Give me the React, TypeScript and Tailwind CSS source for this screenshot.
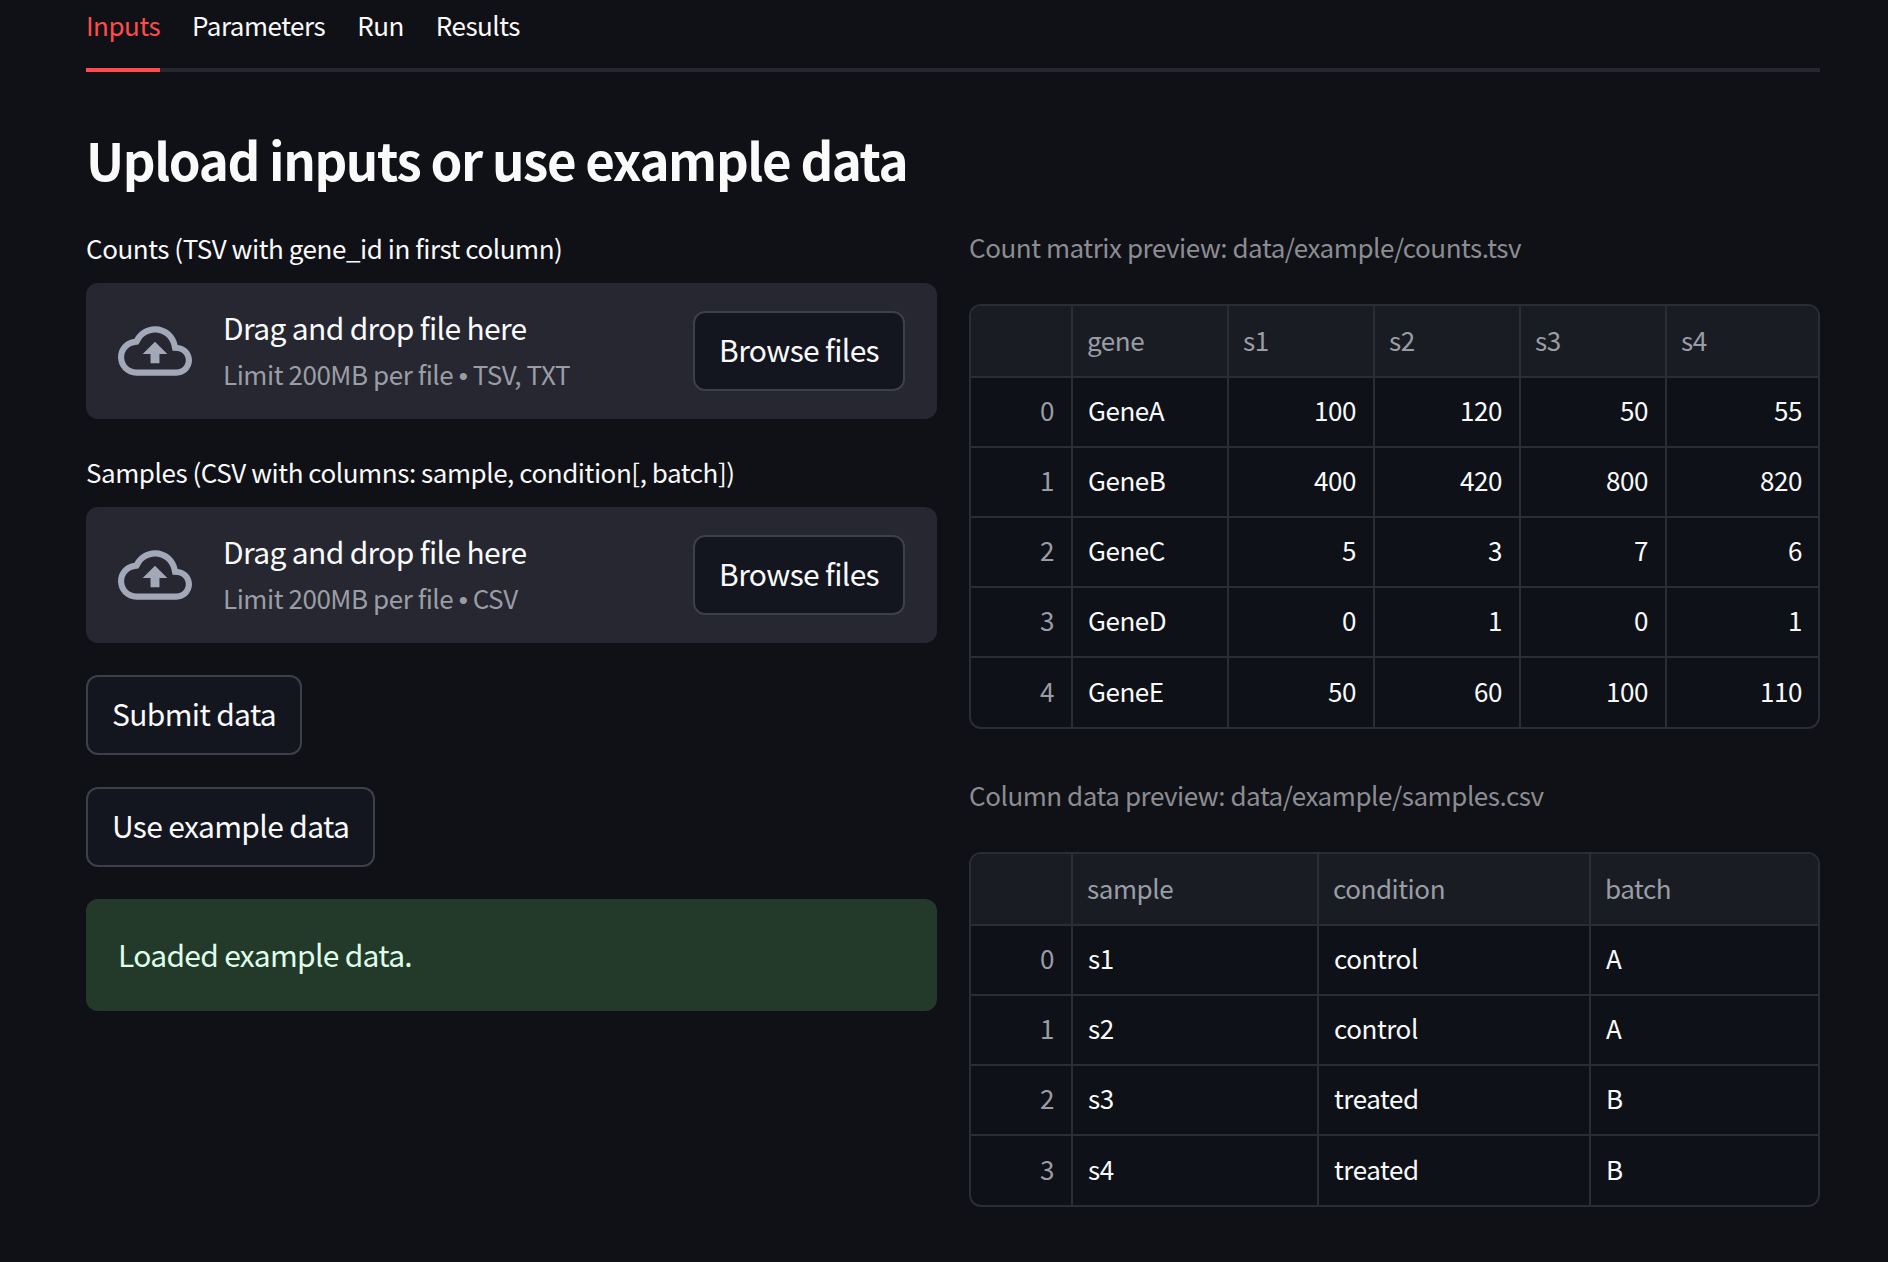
const countRows = [
  ['0', 'GeneA', '100', '120', '50', '55'],
  ['1', 'GeneB', '400', '420', '800', '820'],
  ['2', 'GeneC', '5', '3', '7', '6'],
  ['3', 'GeneD', '0', '1', '0', '1'],
  ['4', 'GeneE', '50', '60', '100', '110'],
]

const sampleRows = [
  ['0', 's1', 'control', 'A'],
  ['1', 's2', 'control', 'A'],
  ['2', 's3', 'treated', 'B'],
  ['3', 's4', 'treated', 'B'],
]

function CloudUpload() {
  return (
    <svg viewBox="0 0 24 24" className="w-[74px] h-[74px] shrink-0 fill-[#a3a8b8]">
      <path d="M19.35 10.04C18.67 6.59 15.64 4 12 4 9.11 4 6.6 5.64 5.35 8.04 2.34 8.36 0 10.91 0 14c0 3.31 2.69 6 6 6h13c2.76 0 5-2.24 5-5 0-2.64-2.05-4.78-4.65-4.96zM19 18H6c-2.21 0-4-1.79-4-4 0-2.05 1.53-3.76 3.56-3.97l1.07-.11.5-.95C8.08 7.14 9.94 6 12 6c2.62 0 4.88 1.86 5.39 4.43l.3 1.5 1.53.11c1.56.1 2.78 1.41 2.78 2.96 0 1.65-1.35 3-3 3zM8 13h2.55v3h2.9v-3H16l-4-4z" />
    </svg>
  )
}

function Button({ label }: { label: string }) {
  return (
    <button className="h-[80px] px-[24px] pb-[3px] rounded-[12px] border-2 border-[#3d3f49] bg-[#13161f] text-[30px] tracking-[-0.65px] text-[#fafafa] whitespace-nowrap">
      {label}
    </button>
  )
}

function Uploader({ label, hint }: { label: string; hint: string }) {
  return (
    <div>
      <p className="h-[33px] text-[26px] leading-[32px] tracking-[-0.45px] text-[#fafafa]">{label}</p>
      <div className="mt-[18px] h-[136px] rounded-[12px] bg-[#262730] flex items-center pl-[32px] pr-[32px]">
        <CloudUpload />
        <div className="ml-[31px] flex-1">
          <p className="text-[30px] leading-[46px] tracking-[-0.65px] text-[#fafafa]">Drag and drop file here</p>
          <p className="pt-[1px] text-[26px] leading-[46px] tracking-[-0.45px] text-[#9b9da5]">
            {hint.split('•')[0]}
            <span className="font-['Liberation_Sans',sans-serif]">•</span>
            {hint.split('•')[1]}
          </p>
        </div>
        <Button label="Browse files" />
      </div>
    </div>
  )
}

interface TableProps {
  columns: string
  headers: string[]
  rows: string[][]
  numeric: boolean
}

function PreviewTable({ columns, headers, rows, numeric }: TableProps) {
  return (
    <div className="rounded-[12px] border-2 border-[#2b2d35] overflow-hidden bg-[#0e1117]">
      <div className={`grid ${columns} h-[72px] bg-[#1a1c24] border-b-2 border-[#2b2d35]`}>
        <div className="border-r-2 border-[#2b2d35]" />
        {headers.map((h, i) => (
          <div
            key={h}
            className={`flex items-center pl-[14px] pb-[3px] text-[26px] tracking-[-0.45px] text-[#9b9da5] ${
              i < headers.length - 1 ? 'border-r-2 border-[#2b2d35]' : ''
            }`}
          >
            {h}
          </div>
        ))}
      </div>
      {rows.map((row, r) => (
        <div
          key={row[0]}
          className={`grid ${columns} ${
            r < rows.length - 1 ? 'h-[70px] border-b-2 border-[#2b2d35]' : 'h-[69px]'
          }`}
        >
          {row.map((cell, i) => (
            <div
              key={i}
              className={`flex items-center pl-[15px] pb-[5px] text-[26px] tracking-[-0.45px] ${
                i === 0 ? 'justify-end text-[#9b9da5]' : 'text-[#fafafa]'
              } ${numeric && i > 1 ? 'justify-end' : ''} ${
                i < row.length - 1 ? 'pr-[17px] border-r-2 border-[#2b2d35]' : 'pr-[16px]'
              }`}
            >
              {cell}
            </div>
          ))}
        </div>
      ))}
    </div>
  )
}

export default function App() {
  return (
    <div className="min-h-[1262px] bg-[#101116] pl-[86px] pr-[68px] font-['Noto_Sans_CJK_SC','Noto_Sans',sans-serif] overflow-hidden">
      {/* Tabs */}
      <div className="flex gap-[32px] h-[72px] border-b-4 border-[#26272f] text-[26px] leading-[50px] tracking-[-0.5px]">
        <div className="h-[72px] border-b-4 border-[#ff4b4b] text-[#ff4b4b]">Inputs</div>
        <div className="text-[#fafafa]">Parameters</div>
        <div className="text-[#fafafa]">Run</div>
        <div className="text-[#fafafa]">Results</div>
      </div>

      <h1 className="mt-[54px] h-[66px] text-[51px] leading-[66px] tracking-[-1.4px] font-bold text-[#fafafa]">
        Upload inputs or use example data
      </h1>

      <div className="mt-[40px] grid grid-cols-[851px_851px] gap-x-[32px]">
        {/* Left column */}
        <div className="flex flex-col items-start">
          <div className="w-full flex flex-col gap-[37px]">
            <Uploader label="Counts (TSV with gene_id in first column)" hint="Limit 200MB per file • TSV, TXT" />
            <Uploader label="Samples (CSV with columns: sample, condition[, batch])" hint="Limit 200MB per file • CSV" />
          </div>
          <div className="mt-[32px] flex flex-col items-start gap-[32px]">
            <Button label="Submit data" />
            <Button label="Use example data" />
          </div>
          <div className="mt-[32px] w-full h-[112px] pb-[2px] rounded-[12px] bg-[#233a2a] flex items-center pl-[32px] text-[30px] tracking-[-0.7px] text-[#dffde9]">
            Loaded example data.
          </div>
        </div>

        {/* Right column */}
        <div>
          <p className="h-[33px] text-[26px] leading-[29px] tracking-[-0.45px] text-[#8c8d92]">Count matrix preview: data/example/counts.tsv</p>
          <div className="mt-[39px]">
            <PreviewTable
              columns="grid-cols-[102px_156px_146px_146px_146px_1fr]"
              headers={['gene', 's1', 's2', 's3', 's4']}
              rows={countRows}
              numeric
            />
          </div>
          <p className="mt-[51px] h-[33px] text-[26px] leading-[29px] tracking-[-0.45px] text-[#8c8d92]">Column data preview: data/example/samples.csv</p>
          <div className="mt-[39px]">
            <PreviewTable
              columns="grid-cols-[102px_246px_272px_1fr]"
              headers={['sample', 'condition', 'batch']}
              rows={sampleRows}
              numeric={false}
            />
          </div>
        </div>
      </div>
    </div>
  )
}
